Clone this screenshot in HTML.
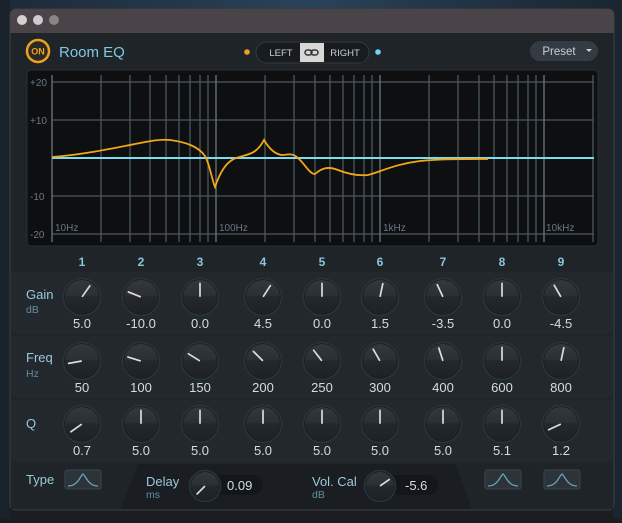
<!DOCTYPE html>
<html><head><meta charset="utf-8"><style>
body{margin:0;width:622px;height:518px;overflow:hidden;background:#1b1d20;font-family:"Liberation Sans",sans-serif;}
</style></head><body>
<svg width="622" height="518" viewBox="0 0 622 518" xmlns="http://www.w3.org/2000/svg" font-family="Liberation Sans, sans-serif">
<defs>
<linearGradient id="bg" x1="0" y1="0" x2="1" y2="0">
<stop offset="0" stop-color="#1d2a38"/><stop offset="0.5" stop-color="#2a4258"/><stop offset="1" stop-color="#1a2530"/>
</linearGradient>
<linearGradient id="kn" x1="0" y1="0" x2="0" y2="1">
<stop offset="0" stop-color="#33383d"/><stop offset="0.45" stop-color="#2b3035"/><stop offset="0.5" stop-color="#24282c"/><stop offset="1" stop-color="#1e2226"/>
</linearGradient>
</defs>
<rect width="622" height="10" fill="url(#bg)"/>
<rect x="0" y="0" width="10" height="518" fill="#1a222b"/>
<rect x="613" y="0" width="9" height="518" fill="#1a2530"/>
<rect x="10" y="9" width="604" height="501" rx="6" fill="#22272c" stroke="#3a3f44"/>
<path d="M10 33 V15 a6 6 0 0 1 6 -6 H608 a6 6 0 0 1 6 6 V33 Z" fill="#4a4347"/>
<circle cx="22" cy="20" r="5" fill="#d4d0d2"/>
<circle cx="38" cy="20" r="5" fill="#cfcbcd"/>
<circle cx="54" cy="20" r="5" fill="#8a8487"/>
<rect x="11" y="33" width="602" height="476" fill="#1f2428"/>
<circle cx="38" cy="51" r="11" fill="#2a2a24" stroke="#f0a020" stroke-width="2.5"/>
<text x="38" y="54.5" font-size="9" font-weight="bold" fill="#f0a020" text-anchor="middle">ON</text>
<text x="59" y="57" font-size="15" fill="#7fc8e6">Room EQ</text>
<circle cx="247" cy="52" r="2.8" fill="#f0a020"/>
<circle cx="378" cy="52" r="2.8" fill="#6fd4f4"/>
<rect x="256" y="42" width="113" height="21" rx="10.5" fill="#181c1f" stroke="#343a40"/>
<rect x="300" y="43" width="24" height="19" fill="#d8d8d8"/>
<text x="281" y="56" font-size="9.5" fill="#c8d0d8" text-anchor="middle">LEFT</text>
<text x="345" y="56" font-size="9.5" fill="#c8d0d8" text-anchor="middle">RIGHT</text>
<g fill="none" stroke="#333" stroke-width="1.5"><rect x="305" y="50" width="7" height="5" rx="2.5"/><rect x="311" y="50" width="7" height="5" rx="2.5"/></g>
<rect x="530" y="41" width="68" height="20" rx="10" fill="#343b42"/>
<text x="559" y="55" font-size="11.5" fill="#c8d0d8" text-anchor="middle">Preset</text>
<path d="M586 49 l6 0 -3 3z" fill="#c8d0d8"/>
<rect x="27" y="70" width="571" height="176" rx="4" fill="#0d0f11" stroke="#2a2f34"/>
<g stroke="#4a5862" stroke-width="1.3">
<line x1="52" y1="82" x2="594" y2="82"/><line x1="52" y1="120" x2="594" y2="120"/>
<line x1="52" y1="196" x2="594" y2="196"/><line x1="52" y1="234" x2="594" y2="234"/>
</g>
<g stroke="#4a5862" stroke-width="1.3">
<line x1="52" y1="75" x2="52" y2="242" stroke="#6a7882"/>
<line x1="101" y1="75" x2="101" y2="242"/><line x1="130" y1="75" x2="130" y2="242"/>
<line x1="150" y1="75" x2="150" y2="242"/><line x1="166" y1="75" x2="166" y2="242"/>
<line x1="179" y1="75" x2="179" y2="242"/><line x1="190" y1="75" x2="190" y2="242"/>
<line x1="200" y1="75" x2="200" y2="242"/><line x1="208" y1="75" x2="208" y2="242"/>
<line x1="216" y1="75" x2="216" y2="242" stroke="#6a7882"/>
<line x1="265" y1="75" x2="265" y2="242"/><line x1="294" y1="75" x2="294" y2="242"/>
<line x1="315" y1="75" x2="315" y2="242"/><line x1="330" y1="75" x2="330" y2="242"/>
<line x1="343" y1="75" x2="343" y2="242"/><line x1="354" y1="75" x2="354" y2="242"/>
<line x1="364" y1="75" x2="364" y2="242"/><line x1="372" y1="75" x2="372" y2="242"/>
<line x1="380" y1="75" x2="380" y2="242" stroke="#6a7882"/>
<line x1="429" y1="75" x2="429" y2="242"/><line x1="458" y1="75" x2="458" y2="242"/>
<line x1="479" y1="75" x2="479" y2="242"/><line x1="494" y1="75" x2="494" y2="242"/>
<line x1="507" y1="75" x2="507" y2="242"/><line x1="518" y1="75" x2="518" y2="242"/>
<line x1="528" y1="75" x2="528" y2="242"/><line x1="536" y1="75" x2="536" y2="242"/>
<line x1="544" y1="75" x2="544" y2="242" stroke="#6a7882"/>
<line x1="593" y1="75" x2="593" y2="242"/>
</g>
<g font-size="10" fill="#6a7884">
<text x="30" y="86">+20</text><text x="30" y="124">+10</text>
<text x="30" y="200">-10</text><text x="30" y="238">-20</text>
<text x="55" y="231">10Hz</text><text x="219" y="231">100Hz</text>
<text x="383" y="231">1kHz</text><text x="546" y="231">10kHz</text>
</g>
<line x1="52" y1="158" x2="594" y2="158" stroke="#7fdcf0" stroke-width="2"/>
<path d="M52 157 C80 155 110 149 135 144 C150 141 160 139 170 140 C185 142 198 146 205 156 C209 162 212 180 215 187 C218 178 224 162 236 158 C248 154 256 155 264 140 C270 150 276 155 283 155 C290 154 294 153 300 160 C306 166 310 174 315 174 C322 168 328 166 338 170 C348 174 358 176 368 175 C380 172 395 164 420 161 C440 159 460 159 488 159" fill="none" stroke="#f2a818" stroke-width="1.8"/>
<rect x="11" y="272" width="602" height="62" fill="#23282d"/>
<rect x="11" y="336" width="602" height="62" fill="#23282d"/>
<rect x="11" y="400" width="602" height="62" fill="#23282d"/>
<g font-size="12" font-weight="bold" fill="#8cc4dc" text-anchor="middle">
<text x="82" y="266">1</text><text x="141" y="266">2</text><text x="200" y="266">3</text><text x="263" y="266">4</text><text x="322" y="266">5</text><text x="380" y="266">6</text><text x="443" y="266">7</text><text x="502" y="266">8</text><text x="561" y="266">9</text>
</g>
<g font-size="13" fill="#9cc8dc">
<text x="26" y="299">Gain</text><text x="26" y="362">Freq</text><text x="26" y="428">Q</text><text x="26" y="484">Type</text>
</g>
<g font-size="10.5" fill="#5f8ea4"><text x="26" y="313">dB</text><text x="26" y="377">Hz</text></g>
<g id="knobs"></g>
<g font-size="13" fill="#d4dce2" text-anchor="middle" id="vals"></g>
<path d="M138 464 H455 L472 509 H120 Z" fill="#1a1e22"/>
<g fill="#2c3339" stroke="#3c454c"><rect x="65" y="470" width="36" height="19" rx="2"/><rect x="485" y="470" width="36" height="19" rx="2"/><rect x="544" y="470" width="36" height="19" rx="2"/></g>
<g fill="none" stroke="#6aa8c4" stroke-width="1.3">
<path d="M68 486 C78 486 80 476 83 474 C86 476 88 486 98 486"/>
<path d="M488 486 C498 486 500 476 503 474 C506 476 508 486 518 486"/>
<path d="M547 486 C557 486 559 476 562 474 C565 476 567 486 577 486"/>
</g>
<text x="146" y="486" font-size="13" fill="#9cc8dc">Delay</text>
<text x="146" y="498" font-size="10.5" fill="#5f8ea4">ms</text>
<rect x="205" y="475" width="58" height="20" rx="10" fill="#14171a"/>
<text x="227" y="490" font-size="13" fill="#d4dce2">0.09</text>
<text x="312" y="486" font-size="13" fill="#9cc8dc">Vol. Cal</text>
<text x="312" y="498" font-size="10.5" fill="#5f8ea4">dB</text>
<rect x="380" y="475" width="58" height="20" rx="10" fill="#14171a"/>
<text x="405" y="490" font-size="13" fill="#d4dce2">-5.6</text>
<g id="bk"></g>
</svg>
<script>
var ns="http://www.w3.org/2000/svg";
function el(p,t,a){var e=document.createElementNS(ns,t);for(var k in a)e.setAttribute(k,a[k]);p.appendChild(e);return e;}
function knob(p,cx,cy,r,ang){
 el(p,"circle",{cx:cx,cy:cy,r:r+1.5,fill:"#171b1e",stroke:"#26363c","stroke-width":1.5});
 el(p,"circle",{cx:cx,cy:cy,r:r,fill:"url(#kn)"});
 var a=ang*Math.PI/180,s=Math.sin(a),c=-Math.cos(a);
 el(p,"line",{x1:cx+s*r*0.05,y1:cy+c*r*0.05,x2:cx+s*r*0.8,y2:cy+c*r*0.8,stroke:"#dcdcdc","stroke-width":1.7,"stroke-linecap":"round"});
}
var xs=[82,141,200,263,322,380,443,502,561];
var rows=[{y:297,vy:328,a:[35,-68,0,33,0,12,-25,0,-30],v:["5.0","-10.0","0.0","4.5","0.0","1.5","-3.5","0.0","-4.5"]},
{y:361,vy:392,a:[-100,-73,-58,-45,-38,-30,-18,0,12],v:["50","100","150","200","250","300","400","600","800"]},
{y:424,vy:455,a:[-125,0,0,0,0,0,0,0,-115],v:["0.7","5.0","5.0","5.0","5.0","5.0","5.0","5.1","1.2"]}];
var K=document.getElementById("knobs"),V=document.getElementById("vals");
rows.forEach(function(r){xs.forEach(function(x,i){knob(K,x,r.y,17,r.a[i]);var t=el(V,"text",{x:x,y:r.vy});t.textContent=r.v[i];});});
var B=document.getElementById("bk");
knob(B,205,486,14,-135);knob(B,380,486,14,55);
</script>
</body></html>
